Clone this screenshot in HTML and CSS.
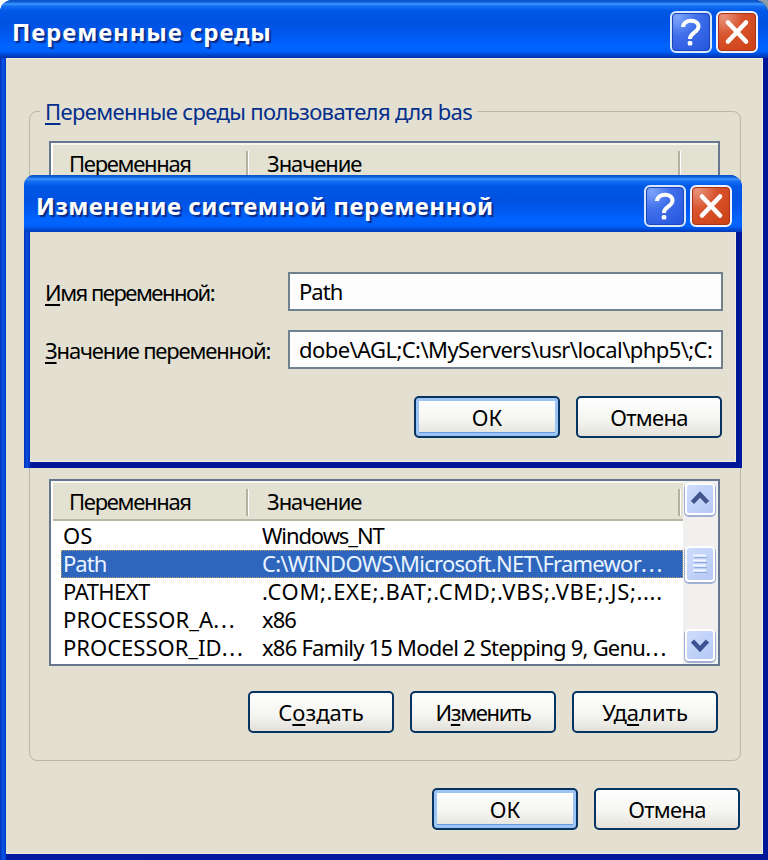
FILE: index.html
```html
<!DOCTYPE html>
<html lang="ru">
<head>
<meta charset="utf-8">
<title>Переменные среды</title>
<link rel="stylesheet" href="styles.css">
</head>
<body>
<svg class="defs" width="0" height="0" aria-hidden="true">
  <symbol id="help" viewBox="0 0 42 42">
    <path d="M13 16c.5-8 15.500-8.500 15.500-.5 0 6-8.500 6-8.500 12.500" fill="none" stroke="#fff" stroke-width="4"/>
    <rect x="17.700" y="30" width="4.600" height="4.400" rx="1.500" fill="#fff"/>
  </symbol>
  <symbol id="close" viewBox="0 0 42 42">
    <path d="M12 11.500L30 30.500M30 11.500L12 30.500" fill="none" stroke="#fff" stroke-width="4.600" stroke-linecap="round"/>
  </symbol>
</svg>
<main class="window">
  <header class="titlebar">
    <h1 class="title t-main">Переменные среды</h1>
    <span class="cap help"><svg><use href="#help"/></svg></span>
    <span class="cap close"><svg><use href="#close"/></svg></span>
  </header>
  <div class="client">
    <section class="group">
      <h2 class="legend"><u>П</u>еременные среды пользователя для bas</h2>
      <div class="list list-user">
        <div class="columns">
          <div class="head">
            <span class="h-name">Переменная</span><span class="h-value">Значение</span>
          </div>
        </div>
      </div>
      <div class="list list-system">
        <div class="columns">
          <div class="head">
            <span class="h-name">Переменная</span><span class="h-value">Значение</span>
          </div>
          <div class="row"><span class="n1">OS</span><span class="r1">Windows_NT</span></div>
          <div class="row selected"><span class="n2">Path</span><span class="r2">C:\WINDOWS\Microsoft.NET\Framewor<span class="dots">...</span></span></div>
          <div class="row"><span class="n3">PATHEXT</span><span class="r3">.COM;.EXE;.BAT;.CMD;.VBS;.VBE;.JS;....</span></div>
          <div class="row"><span class="n4">PROCESSOR_A<span class="dots">...</span></span><span class="r4">x86</span></div>
          <div class="row"><span class="n5">PROCESSOR_ID<span class="dots">...</span></span><span class="r5">x86 Family 15 Model 2 Stepping 9, Genu<span class="dots">...</span></span></div>
        </div>
        <div class="scrollbar">
          <span class="sb"><svg viewBox="0 0 32 32"><path d="M7.500 19.500L15 11.500L22.500 19.500" fill="none" stroke="#42548c" stroke-width="4.500"/></svg></span>
          <span class="sb thumb"><svg viewBox="0 0 32 38"><path d="M8 9.500H21M8 14.500H21M8 19.500H21M8 24.500H21" stroke="#f2f8ff" stroke-width="2"/><path d="M9 11.500H22M9 16.500H22M9 21.500H22M9 26.500H22" stroke="#8fa9dc" stroke-width="1"/></svg></span>
          <span class="sb"><svg viewBox="0 0 32 32"><path d="M7.500 12L15 20L22.500 12" fill="none" stroke="#3d5193" stroke-width="4.500"/></svg></span>
        </div>
      </div>
      <div class="buttons">
        <button><span class="b-new">С<u>о</u>здать</span></button>
        <button><span class="b-edit">И<u>з</u>менить</span></button>
        <button><span class="b-del">Уд<u>а</u>лить</span></button>
      </div>
    </section>
    <div class="buttons footer">
      <button class="default"><span class="b-ok">ОК</span></button>
      <button><span class="b-cancel">Отмена</span></button>
    </div>
  </div>
</main>
<section class="dialog">
  <header class="titlebar">
    <h1 class="title t-edit">Изменение системной переменной</h1>
    <span class="cap help"><svg><use href="#help"/></svg></span>
    <span class="cap close"><svg><use href="#close"/></svg></span>
  </header>
  <div class="form">
    <div class="field"><label class="l-name"><u>И</u>мя переменной:</label><div class="input"><span class="i-name">Path</span></div></div>
    <div class="field"><label class="l-value"><u>З</u>начение переменной:</label><div class="input"><span class="i-value">dobe\AGL;C:\MyServers\usr\local\php5\;C:</span></div></div>
    <div class="buttons">
      <button class="default"><span class="b-ok">ОК</span></button>
      <button><span class="b-cancel">Отмена</span></button>
    </div>
  </div>
</section>
</body>
</html>
```
FILE: styles.css
```css
* { box-sizing: border-box; }
body {
  margin: 0;
  width: 768px;
  height: 860px;
  overflow: hidden;
  position: relative;
  background: linear-gradient(90deg, #fff 50%, #8a9aa8 50%);
  font: 22px/28px "Noto Sans", "DejaVu Sans", sans-serif;
  color: #000;
  white-space: nowrap;
}
.defs { display: block; height: 0; }
u { text-decoration-thickness: 2px; text-underline-offset: 3px; text-decoration-skip-ink: none; }

.window {
  width: 768px;
  height: 860px;
  border-radius: 12px 14px 0 0;
  overflow: hidden;
  background: linear-gradient(90deg, #0030b8 0, #0a58e8 3px, #0038c8 6px, #0019a0 7px, #00179a 100%);
  display: flex;
  flex-direction: column;
}
.titlebar {
  flex: none;
  height: 58px;
  display: flex;
  align-items: center;
  gap: 4px;
  padding: 5px 10px 0 12px;
  background: linear-gradient(#0a52c8 0, #0d5fd8 2px, #3f98ff 4px, #1670f4 6px, #0058e6 11px, #0052e2 24px, #0059f0 36px, #0064ff 45px, #0062fb 51px, #0046d0 55px, #0030a8 58px);
}
.title {
  flex: 1;
  margin: 0;
  font: bold 24px/30px "Noto Sans", sans-serif;
  color: #fff;
  text-shadow: 2px 2px 1px #0a2a86;
}
.t-main { letter-spacing: 0.9px; }
.t-edit { letter-spacing: 0.48px; }
.cap {
  width: 42px;
  height: 42px;
  border: 2px solid #eef3ff;
  border-radius: 6px;
}
.cap svg { display: block; width: 42px; height: 42px; margin: -2px; }
.help { background: radial-gradient(circle at 15% 10%, #7fa6fb 0, #4070ea 40%, #2253dc 100%); border-color: #d8e8ff; box-shadow: inset 0 0 0 1px #1c46b8; }
.close { background: radial-gradient(circle at 15% 10%, #e8937a 0, #d8532e 40%, #cc4013 100%); box-shadow: inset 0 0 0 1px #a8341c; }

.client {
  width: 757px;
  height: 796px;
  margin-left: 6px;
  padding: 52px 21px 0 23px;
  background: #e3e0d2;
  border: solid #f0eee6;
  border-width: 1px 1px 1px 0;
}
.group {
  height: 650px;
  border: 1px solid #bcb8a8;
  border-radius: 8px;
  padding: 0 21px 0 19px;
}
.legend {
  width: max-content;
  margin: -15px 0 0 -9px;
  padding: 0 5px;
  font-size: 22px;
  font-weight: 400;
  line-height: 28px;
  letter-spacing: -0.64px;
  color: #042e8c;
  background: #e3e0d2;
}
.list {
  width: 671px;
  border: 2px solid #66788f;
  background: #fff;
  display: flex;
  justify-content: space-between;
}
.list-user { height: 186px; margin-top: 16px; }
.list-system { height: 187px; margin-top: 152px; }
.columns { width: 632px; padding-left: 2px; }
.list-user .columns { width: 100%; }
.head {
  position: relative;
  height: 40px;
  margin: 0 0 1px;
  padding: 4px 0 0 16px;
  display: grid;
  grid-template-columns: 198px 1fr;
  background: #e2e1d2;
  border-top: 2px solid #f6f5ee;
  border-bottom: 2px solid #b9b6a3;
  line-height: 28px;
}
.head::before, .head::after {
  content: "";
  position: absolute;
  top: 6px;
  width: 2px;
  height: 27px;
  background: #b3b1a2;
  border-right: 1px solid #fff;
}
.head::before { left: 193px; }
.head::after { left: 625px; }
.h-name { letter-spacing: -1.3px; }
.h-value { letter-spacing: -1.05px; }
.row {
  height: 28px;
  margin-left: 8px;
  padding-left: 2px;
  display: grid;
  grid-template-columns: 199px 1fr;
  line-height: 27px;
}
.selected { background: #2f66bd; color: #eaf4ff; outline: 1px dotted #b89a68; outline-offset: -1px; }
.n2, .i-name, .r4 { letter-spacing: -0.95px; }
.n3 { letter-spacing: -0.55px; }
.n4 { letter-spacing: 0.1px; }
.n5 { letter-spacing: 0; }
.r1 { letter-spacing: -1.1px; }
.r2 { letter-spacing: -0.75px; }
.r3 { letter-spacing: 0.66px; }
.r5 { letter-spacing: -0.78px; }
.dots { letter-spacing: 1.8px; }
.scrollbar {
  flex: none;
  width: 35px;
  padding: 2px 2px 3px 1px;
  display: flex;
  flex-direction: column;
  align-items: center;
  justify-content: space-between;
  background: #f2f0ef;
}
.sb {
  width: 30px;
  height: 32px;
  border: 2px solid #fff;
  border-radius: 4px;
  background: linear-gradient(135deg, #cfdcfc, #b4c9f5);
  box-shadow: 0 1px 0 1px #9fb0d4;
}
.sb svg { display: block; width: 32px; height: 32px; margin: -2px; }
.thumb { height: 36px; margin-bottom: 17px; }
.thumb svg { height: 38px; }

.buttons { display: flex; gap: 16px; justify-content: flex-end; }
.group .buttons { margin: 25px 1px 0 0; }
.footer { margin: 27px 1px 0 0; }
button {
  width: 146px;
  height: 42px;
  margin: 0;
  padding: 0;
  border: 2px solid #06335f;
  border-radius: 5px;
  background: linear-gradient(#fff 0, #f4f4f0 60%, #e2e0da 100%);
  font: inherit;
  line-height: 28px;
  color: #000;
}
.b-edit { letter-spacing: -1.35px; }
.b-cancel { letter-spacing: -0.7px; }
.default { box-shadow: inset 0 0 0 3px #9cc4f4, inset 0 -4px 0 #6a98e0; }

.dialog {
  position: absolute;
  left: 24px;
  top: 175px;
  width: 718px;
  height: 293px;
  border-radius: 10px 12px 0 0;
  overflow: hidden;
  background: linear-gradient(90deg, #0030b8 0, #0a50dc 3px, #0030b8 6px, #00179a 7px, #00179a 100%);
}
.dialog .titlebar { height: 57px; padding: 4px 10px 0 12px; }
.form {
  width: 706px;
  height: 230px;
  margin-left: 6px;
  padding: 40px 13px 0 15px;
  background: #e3e0d2;
  border-right: 1px solid #f0eee6;
  border-bottom: 1px solid #f0eee6;
}
.field { display: grid; grid-template-columns: 243px 435px; align-items: center; margin-bottom: 19px; }
.l-name { letter-spacing: -1.5px; }
.l-value { letter-spacing: -1.15px; }
.input { height: 39px; padding: 3px 9px; background: #fdfdfd; border: 2px solid #70818e; }
.i-value { letter-spacing: -0.58px; }
.form .buttons { margin: 27px 0 0; }
```
